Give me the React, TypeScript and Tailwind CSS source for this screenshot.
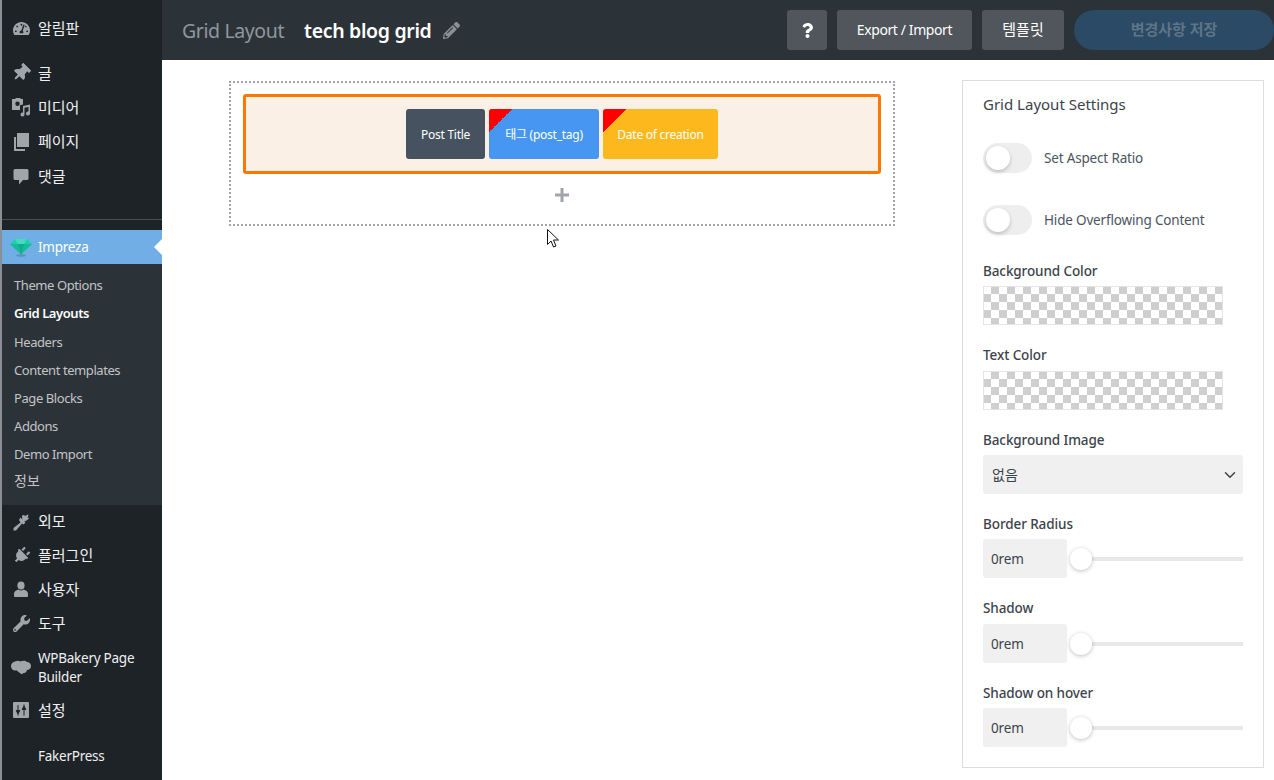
import type { ReactNode } from "react"
import {
  FaPencilAlt,
  FaPlug,
  FaQuestion,
  FaThumbtack,
  FaWrench,
  FaTachometerAlt,
} from "react-icons/fa"
import { FiChevronDown } from "react-icons/fi"

const font = "font-['Noto_Sans','Noto_Sans_CJK_KR',sans-serif]"

function MediaIcon() {
  return (
    <svg viewBox="0 0 20 20" className="h-[20px] w-[20px]" fill="#a0a5aa">
      <path d="M1 2h3l1-1h4l1 1h2v5.500l-3 .8V13H1zM6.500 4.500a2.200 2.200 0 1 0 0 4.400a2.200 2.200 0 0 0 0-4.400z" />
      <path d="M12 9l7-1.500v9a2 2 0 1 1-1.500-1.900V10l-4 .8v6.700a2 2 0 1 1-1.500-1.900z" />
    </svg>
  )
}

function PagesIcon() {
  return (
    <svg viewBox="0 0 16 18" className="h-[18px] w-[16px]" fill="#a0a5aa">
      <path d="M4 0h12v14H4z" />
      <path d="M1 4h2v12h9v2H1z" />
    </svg>
  )
}

function CommentIcon() {
  return (
    <svg viewBox="0 0 16 17" className="h-[17px] w-[16px]" fill="#a0a5aa">
      <path d="M2 1h12a1.500 1.500 0 0 1 1.500 1.500v8A1.500 1.500 0 0 1 14 12h-4l-4 4.500V12H2a1.500 1.500 0 0 1-1.500-1.500v-8A1.500 1.500 0 0 1 2 1z" />
    </svg>
  )
}

function BrushIcon() {
  return (
    <svg viewBox="0 0 18 18" className="h-[18px] w-[18px]" fill="#a0a5aa">
      <path d="M10 2.500l2-.5 1 1 3-1.500 .5 .5-1 3 1.500-.5-.5 1.500-2 1.500-2.500 1-1.500.5z" />
      <path d="M8.500 4.500l5 5-2 2-1.500-1L4 17.500H1.500V15l7-5.500-1.500-2.500z" />
    </svg>
  )
}

function UserIcon() {
  return (
    <svg viewBox="0 0 16 16" className="h-[16px] w-[16px]" fill="#a0a5aa">
      <ellipse cx="8" cy="4.500" rx="3.600" ry="4" />
      <path d="M5.500 8.500c1.500 1.200 3.500 1.200 5 0 2.500 .8 4.500 1.800 4.500 4.200V15a1 1 0 0 1-1 1H2a1 1 0 0 1-1-1v-2.300c0-2.400 2-3.400 4.500-4.200z" />
    </svg>
  )
}

function CloudIcon() {
  return (
    <svg viewBox="0 0 22 16" className="h-[16px] w-[22px]" fill="#a0a5aa">
      <path d="M5 1.500C7 .5 9 .5 10.500 1.500C12.500 .5 15.500 .5 17 2C19 2 21 3.500 21 6C21 8.500 19 10 17 10C16.500 12 15 13.500 13.500 13C12.500 14.500 11 14.500 10 13C8 12 7.500 11 7 10.500C4 11 1 9.500 1 6C1 3.500 3 2 5 1.500Z" />
    </svg>
  )
}

function SettingsIcon() {
  return (
    <svg viewBox="0 0 16 16" className="h-[16px] w-[16px]">
      <rect width="16" height="16" rx="1" fill="#a0a5aa" />
      <path d="M5 3v6M3.200 8.500h3.600L5 12zM5 12v1.500M11 13.500V7M9.200 7.500h3.600L11 4zM11 4V2.500" stroke="#1d2327" strokeWidth="1" fill="#1d2327" />
    </svg>
  )
}

function GemIcon() {
  return (
    <svg viewBox="0 0 22 20" className="h-[20px] w-[22px]">
      <ellipse cx="11" cy="18.500" rx="5" ry="1.200" fill="#5f8fb8" />
      <path d="M5 2h12l5 5-11 10.500L0 7z" fill="#1ccfae" />
      <path d="M0 7h22L11 17.500z" fill="#17bb9c" />
      <path d="M5 2h12l-3 5H8z" fill="#3fdcbe" />
      <path d="M8 7h6l-3 10.500z" fill="#12a98c" />
    </svg>
  )
}

function MenuItem({
  icon,
  children,
  className,
  latin,
}: {
  icon?: ReactNode
  children: ReactNode
  className?: string
  latin?: boolean
}) {
  return (
    <div
      className={`flex items-center leading-[19px] text-[#f0f0f1] ${
        latin ? "text-[13.5px] tracking-[-0.25px]" : "text-[15px]"
      } ${className ?? "h-[34px]"}`}
    >
      <div className="flex w-[36px] shrink-0 items-center justify-center pl-[2px] text-[17px] text-[#a0a5aa]">
        {icon}
      </div>
      <div>{children}</div>
    </div>
  )
}

function SubItem({ label, active, ko }: { label: string; active?: boolean; ko?: boolean }) {
  return (
    <div
      className={`flex items-center pl-[12px] ${
        ko ? "h-[24px] text-[14px]" : "h-[28.150px] text-[13px] tracking-[-0.42px]"
      } ${active ? "font-semibold text-white" : "text-[#c3c4c7]"}`}
    >
      {label}
    </div>
  )
}

function Sidebar() {
  return (
    <div className="flex h-[780px] w-[162px] shrink-0 flex-col border-l-2 border-[#8c8f94] bg-[#1d2327]">
      <MenuItem icon={<FaTachometerAlt />} className="mt-[11px] h-[34px]">알림판</MenuItem>
      <MenuItem icon={<FaThumbtack className="rotate-45 text-[18px]" />} className="mt-[11px] h-[34px]">글</MenuItem>
      <MenuItem icon={<MediaIcon />}>미디어</MenuItem>
      <MenuItem icon={<PagesIcon />} className="h-[35px]">페이지</MenuItem>
      <MenuItem icon={<CommentIcon />}>댓글</MenuItem>
      <div className="mt-[26px] h-px bg-[#4a4e52]" />
      <div className="relative mt-[10px] h-[34px] bg-[#72aee6]">
        <div className="flex h-full items-center text-[13.5px] tracking-[-0.25px] text-white">
          <div className="flex w-[36px] shrink-0 justify-center pl-[1px]"><GemIcon /></div>
          Impreza
        </div>
        <div className="absolute right-0 top-[9px] h-0 w-0 border-y-[8px] border-r-[8px] border-y-transparent border-r-white" />
      </div>
      <div className="flex h-[241px] flex-col bg-[#2c3338] pt-[8px]">
        <SubItem label="Theme Options" />
        <SubItem label="Grid Layouts" active />
        <SubItem label="Headers" />
        <SubItem label="Content templates" />
        <SubItem label="Page Blocks" />
        <SubItem label="Addons" />
        <SubItem label="Demo Import" />
        <SubItem label="정보" ko />
      </div>
      <MenuItem icon={<BrushIcon />} className="h-[33px]">외모</MenuItem>
      <MenuItem icon={<FaPlug className="rotate-45" />}>플러그인</MenuItem>
      <MenuItem icon={<UserIcon />}>사용자</MenuItem>
      <MenuItem icon={<FaWrench />}>도구</MenuItem>
      <MenuItem icon={<CloudIcon />} latin className="h-[53px] pt-[3px]">
        WPBakery Page
        <br />
        Builder
      </MenuItem>
      <MenuItem icon={<SettingsIcon />} className="mt-[2px] h-[30px]">설정</MenuItem>
      <MenuItem latin className="mt-[15px] h-[32px]">FakerPress</MenuItem>
    </div>
  )
}

function HeaderButton({ children, className }: { children: ReactNode; className: string }) {
  return (
    <div className={`flex h-[40px] items-center justify-center rounded-[3px] bg-[#50565c] text-white ${className}`}>
      {children}
    </div>
  )
}

function Header() {
  return (
    <div className="flex h-[60px] items-center bg-[#2c3338] pl-[20px]">
      <span className="pt-[2px] text-[19.500px] tracking-[-0.39px] text-[#8f979e]">Grid Layout</span>
      <span className="ml-[20px] pt-[2px] text-[19.500px] font-semibold tracking-[-0.33px] text-white">tech blog grid</span>
      <FaPencilAlt className="ml-[12px] text-[17px] text-[#8c8f94]" />
      <div className="ml-auto flex items-center gap-[10px]">
        <HeaderButton className="w-[40px]">
          <FaQuestion className="text-[15px]" />
        </HeaderButton>
        <HeaderButton className="w-[135px] pb-[1px] text-[14px] tracking-[-0.4px]">Export / Import</HeaderButton>
        <HeaderButton className="w-[82px] pb-[1px] text-[15px]">템플릿</HeaderButton>
        <div className="flex h-[40px] w-[200px] items-center justify-center rounded-full bg-[#2a4a66] pb-[1px] text-[15px] font-bold text-[#5f7486]">
          변경사항 저장
        </div>
      </div>
    </div>
  )
}

function Chip({ label, color, width, corner }: { label: string; color: string; width: string; corner?: boolean }) {
  return (
    <div className={`relative flex h-[50px] items-center justify-center overflow-hidden rounded-[3px] pt-[2px] text-[12px] tracking-[-0.25px] text-white ${color} ${width}`}>
      {corner && (
        <div className="absolute left-0 top-0 h-[23px] w-[23px] bg-[linear-gradient(135deg,#ff0000_50%,transparent_50%)]" />
      )}
      {label}
    </div>
  )
}

function Canvas() {
  return (
    <div className="ml-[67px] mt-[21px] h-[145px] w-[666px] border-2 border-dotted border-[#a0a5aa] px-[12px] pt-[11px]">
      <div className="flex h-[80px] items-center justify-center gap-[4px] rounded-[3px] border-[3px] border-[#ff7700] bg-[#faf0e6]">
        <Chip label="Post Title" color="bg-[#465260]" width="w-[79px]" />
        <Chip label="태그 (post_tag)" color="bg-[#4797f2]" width="w-[110px]" corner />
        <Chip label="Date of creation" color="bg-[#fdb81e]" width="w-[115px]" corner />
      </div>
      <div className="flex h-[42px] items-center justify-center text-[#a0a5aa]">
        <svg viewBox="0 0 14 14" className="h-[14px] w-[14px]" fill="currentColor">
          <path d="M5.500 0h3v5.500H14v3H8.500V14h-3V8.500H0v-3h5.500z" />
        </svg>
      </div>
    </div>
  )
}

function Toggle({ label, className }: { label: string; className: string }) {
  return (
    <div className={`flex items-center ${className}`}>
      <div className="flex h-[30px] w-[49px] items-center rounded-full bg-[#eeeeee] pl-[3px]">
        <div className="h-[24px] w-[24px] rounded-full bg-white shadow-[0_2px_4px_rgba(0,0,0,0.2)]" />
      </div>
      <span className="ml-[12px] text-[13.500px] tracking-[-0.17px] text-[#4b5563]">{label}</span>
    </div>
  )
}

function FieldLabel({ label, className }: { label: string; className: string }) {
  return <div className={`h-[20px] text-[13.500px] font-medium leading-[20px] tracking-[-0.1px] text-[#3c434a] ${className}`}>{label}</div>
}

function Swatch({ className }: { className: string }) {
  return (
    <div className={`h-[39px] w-[240px] bg-[repeating-conic-gradient(#cfcfcf_0_25%,#ffffff_0_50%)] bg-[length:16px_16px] shadow-[inset_0_0_0_1px_#e5e5e5] ${className}`} />
  )
}

function SliderRow({ className }: { className: string }) {
  return (
    <div className={`flex h-[39px] items-center ${className}`}>
      <div className="flex h-[39px] w-[84px] items-center rounded-[3px] bg-[#f0f0f0] pl-[8px] pt-[2px] text-[13.500px] tracking-[-0.1px] text-[#3c434a]">
        0rem
      </div>
      <div className="relative ml-[3px] h-[4px] flex-1 bg-[#e8e8e8]">
        <div className="absolute left-0 top-[-9px] h-[22px] w-[22px] rounded-full bg-white shadow-[0_1px_4px_rgba(0,0,0,0.25)]" />
      </div>
    </div>
  )
}

function SettingsPanel() {
  return (
    <div className="mr-[10px] mt-[20px] h-[688px] w-[302px] shrink-0 border border-[#dddddd] px-[20px] pt-[12px]">
      <div className="h-[22px] text-[15px] leading-[22px] text-[#3c434a]">Grid Layout Settings</div>
      <Toggle label="Set Aspect Ratio" className="mt-[28px]" />
      <Toggle label="Hide Overflowing Content" className="mt-[32px]" />
      <FieldLabel label="Background Color" className="mt-[26px]" />
      <Swatch className="mt-[5px]" />
      <FieldLabel label="Text Color" className="mt-[20px]" />
      <Swatch className="mt-[6px]" />
      <FieldLabel label="Background Image" className="mt-[20px]" />
      <div className="mt-[5px] flex h-[39px] w-[260px] items-center justify-between rounded-[3px] bg-[#f0f0f0] pl-[9px] pr-[4px] text-[14px] text-[#3c434a]">
        없음
        <FiChevronDown className="text-[18px]" />
      </div>
      <FieldLabel label="Border Radius" className="mt-[20px]" />
      <SliderRow className="mt-[5px]" />
      <FieldLabel label="Shadow" className="mt-[20px]" />
      <SliderRow className="mt-[6px]" />
      <FieldLabel label="Shadow on hover" className="mt-[20px]" />
      <SliderRow className="mt-[5px]" />
    </div>
  )
}

export default function App() {
  return (
    <div className={`flex h-[780px] w-[1274px] overflow-hidden bg-white ${font}`}>
      <Sidebar />
      <div className="flex min-w-0 flex-1 flex-col">
        <Header />
        <div className="relative flex flex-1 justify-between">
          <Canvas />
          <SettingsPanel />
          <svg viewBox="0 0 12 19" className="absolute left-[385px] top-[169px] h-[19px] w-[12px]">
            <path d="M.5.500v15l3.500-3.500 2.500 6 2.500-1-2.500-6h5z" fill="#fff" stroke="#111" strokeWidth="1" />
          </svg>
        </div>
      </div>
    </div>
  )
}
